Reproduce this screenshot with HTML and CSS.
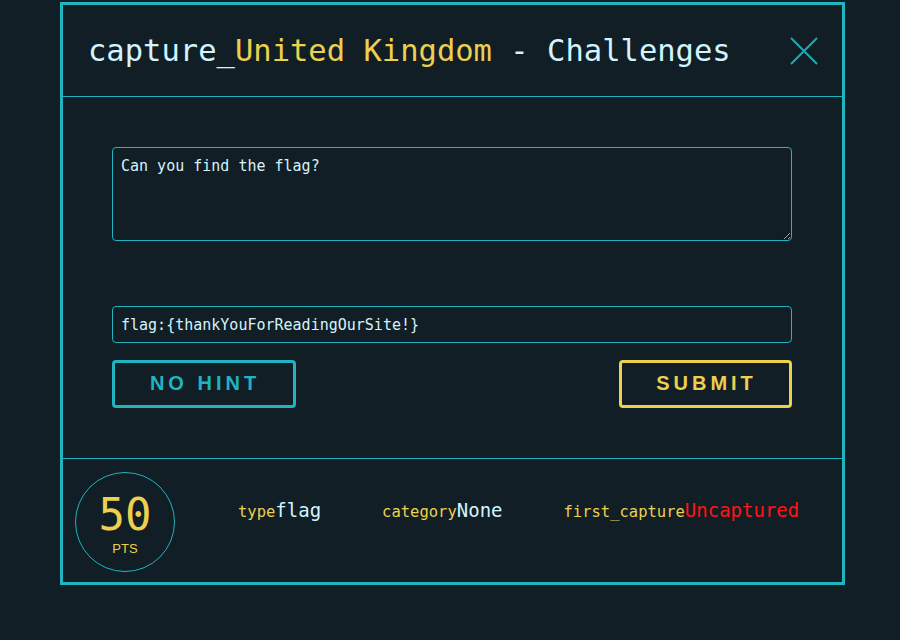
FILE: index.html
```html
<!DOCTYPE html>
<html lang="en">
<head>
<meta charset="utf-8">
<title>capture_United Kingdom - Challenges</title>
<link rel="stylesheet" href="styles.css">
</head>
<body>
<div class="modal">
  <div class="modal-header">
    <h1 class="title"><span class="t-light">capture_</span><span class="t-yellow">United Kingdom</span><span class="t-light"> - Challenges</span></h1>
    <button class="close" aria-label="Close">
      <svg width="28" height="28" viewBox="0 0 28 28"><path d="M1 1 L27 27 M27 1 L1 27" stroke="#1fa9b4" stroke-width="2" fill="none"/></svg>
    </button>
  </div>
  <div class="modal-body">
    <textarea class="desc" readonly>Can you find the flag?</textarea>
    <input class="flag-input" type="text" value="flag:{thankYouForReadingOurSite!}">
    <div class="actions">
      <button class="btn btn-hint">NO HINT</button>
      <button class="btn btn-submit">SUBMIT</button>
    </div>
  </div>
  <div class="modal-footer">
    <div class="points">
      <div class="points-num">50</div>
      <div class="points-label">PTS</div>
    </div>
    <div class="stats">
      <div class="stat"><span class="stat-label">type</span><span class="stat-value">flag</span></div>
      <div class="stat"><span class="stat-label">category</span><span class="stat-value">None</span></div>
      <div class="stat"><span class="stat-label">first_capture</span><span class="stat-value red">Uncaptured</span></div>
    </div>
  </div>
</div>
</body>
</html>
```

FILE: styles.css
```css
html, body {
  margin: 0;
  padding: 0;
  background: #121e25;
}
body {
  font-family: "DejaVu Sans Mono", "Liberation Mono", monospace;
  color: #d6f3fb;
}
.modal {
  margin: 2px 0 0 60px;
  width: 785px;
  box-sizing: border-box;
  border: 3px solid #1fb4c0;
  background: #121e25;
}
.modal-header {
  height: 92px;
  box-sizing: border-box;
  display: flex;
  align-items: center;
  justify-content: space-between;
  padding: 0 24px 0 25px;
  border-bottom: 1px solid #1fb4c0;
}
.title {
  margin: 0;
  font-weight: normal;
  font-size: 30.5px;
  line-height: 36px;
  white-space: nowrap;
}
.t-light { color: #d3f4ff; }
.t-yellow { color: #ecd04e; }
.close {
  background: none;
  border: 0;
  padding: 0;
  width: 28px;
  height: 28px;
  display: flex;
}
.modal-body {
  padding: 50px 50px 50px 49px;
  border-bottom: 1px solid #1fb4c0;
  display: flex;
  flex-direction: column;
}
.desc {
  display: block;
  box-sizing: border-box;
  width: 100%;
  height: 94px;
  margin: 0 0 65px 0;
  padding: 9px 8px 8px;
  border: 1px solid #1fb4c0;
  border-radius: 4px;
  background: #121e25;
  color: #d6f3fb;
  font-family: "DejaVu Sans Mono", monospace;
  font-size: 15px;
  resize: vertical;
  outline: none;
}
.flag-input {
  display: block;
  box-sizing: border-box;
  width: 100%;
  height: 37px;
  margin: 0;
  padding: 0 8px;
  border: 1px solid #1fb4c0;
  border-radius: 4px;
  background: #121e25;
  color: #d6f3fb;
  font-family: "DejaVu Sans Mono", monospace;
  font-size: 15px;
  outline: none;
}
.actions {
  display: flex;
  justify-content: space-between;
  margin-top: 17px;
}
.btn {
  box-sizing: border-box;
  height: 48px;
  background: transparent;
  border: 3px solid;
  border-radius: 4px;
  font-family: "Liberation Sans", Arial, sans-serif;
  font-weight: bold;
  font-size: 20px;
  line-height: 20px;
  letter-spacing: 4px;
  padding: 0 0 2px 2px;
  cursor: pointer;
}
.btn-hint {
  width: 184px;
  border-color: #1fb4c0;
  color: #1fb4c0;
}
.btn-submit {
  width: 173px;
  border-color: #ecd04e;
  color: #ecd04e;
}
.modal-footer {
  height: 123px;
  display: flex;
  align-items: flex-start;
}
.points {
  box-sizing: border-box;
  width: 100px;
  height: 100px;
  margin: 13px 0 0 12px;
  border: 1px solid #1fb4c0;
  border-radius: 50%;
  display: flex;
  flex-direction: column;
  align-items: center;
  justify-content: center;
  color: #ecd04e;
}
.points-num {
  font-family: "DejaVu Sans Mono", monospace;
  font-size: 44px;
  line-height: 44px;
  margin-top: 4px;
}
.points-label {
  font-family: "Liberation Sans", Arial, sans-serif;
  font-size: 13px;
  line-height: 14px;
  margin-top: 5px;
}
.stats {
  display: flex;
  gap: 61px;
  margin: 40px 0 0 63px;
  white-space: nowrap;
}
.stat {
  line-height: 22px;
}
.stat-label {
  color: #ecd04e;
  font-size: 15.5px;
}
.stat-value {
  color: #d3f4ff;
  font-size: 19px;
}
.stat-value.red {
  color: #ff1414;
}
```
